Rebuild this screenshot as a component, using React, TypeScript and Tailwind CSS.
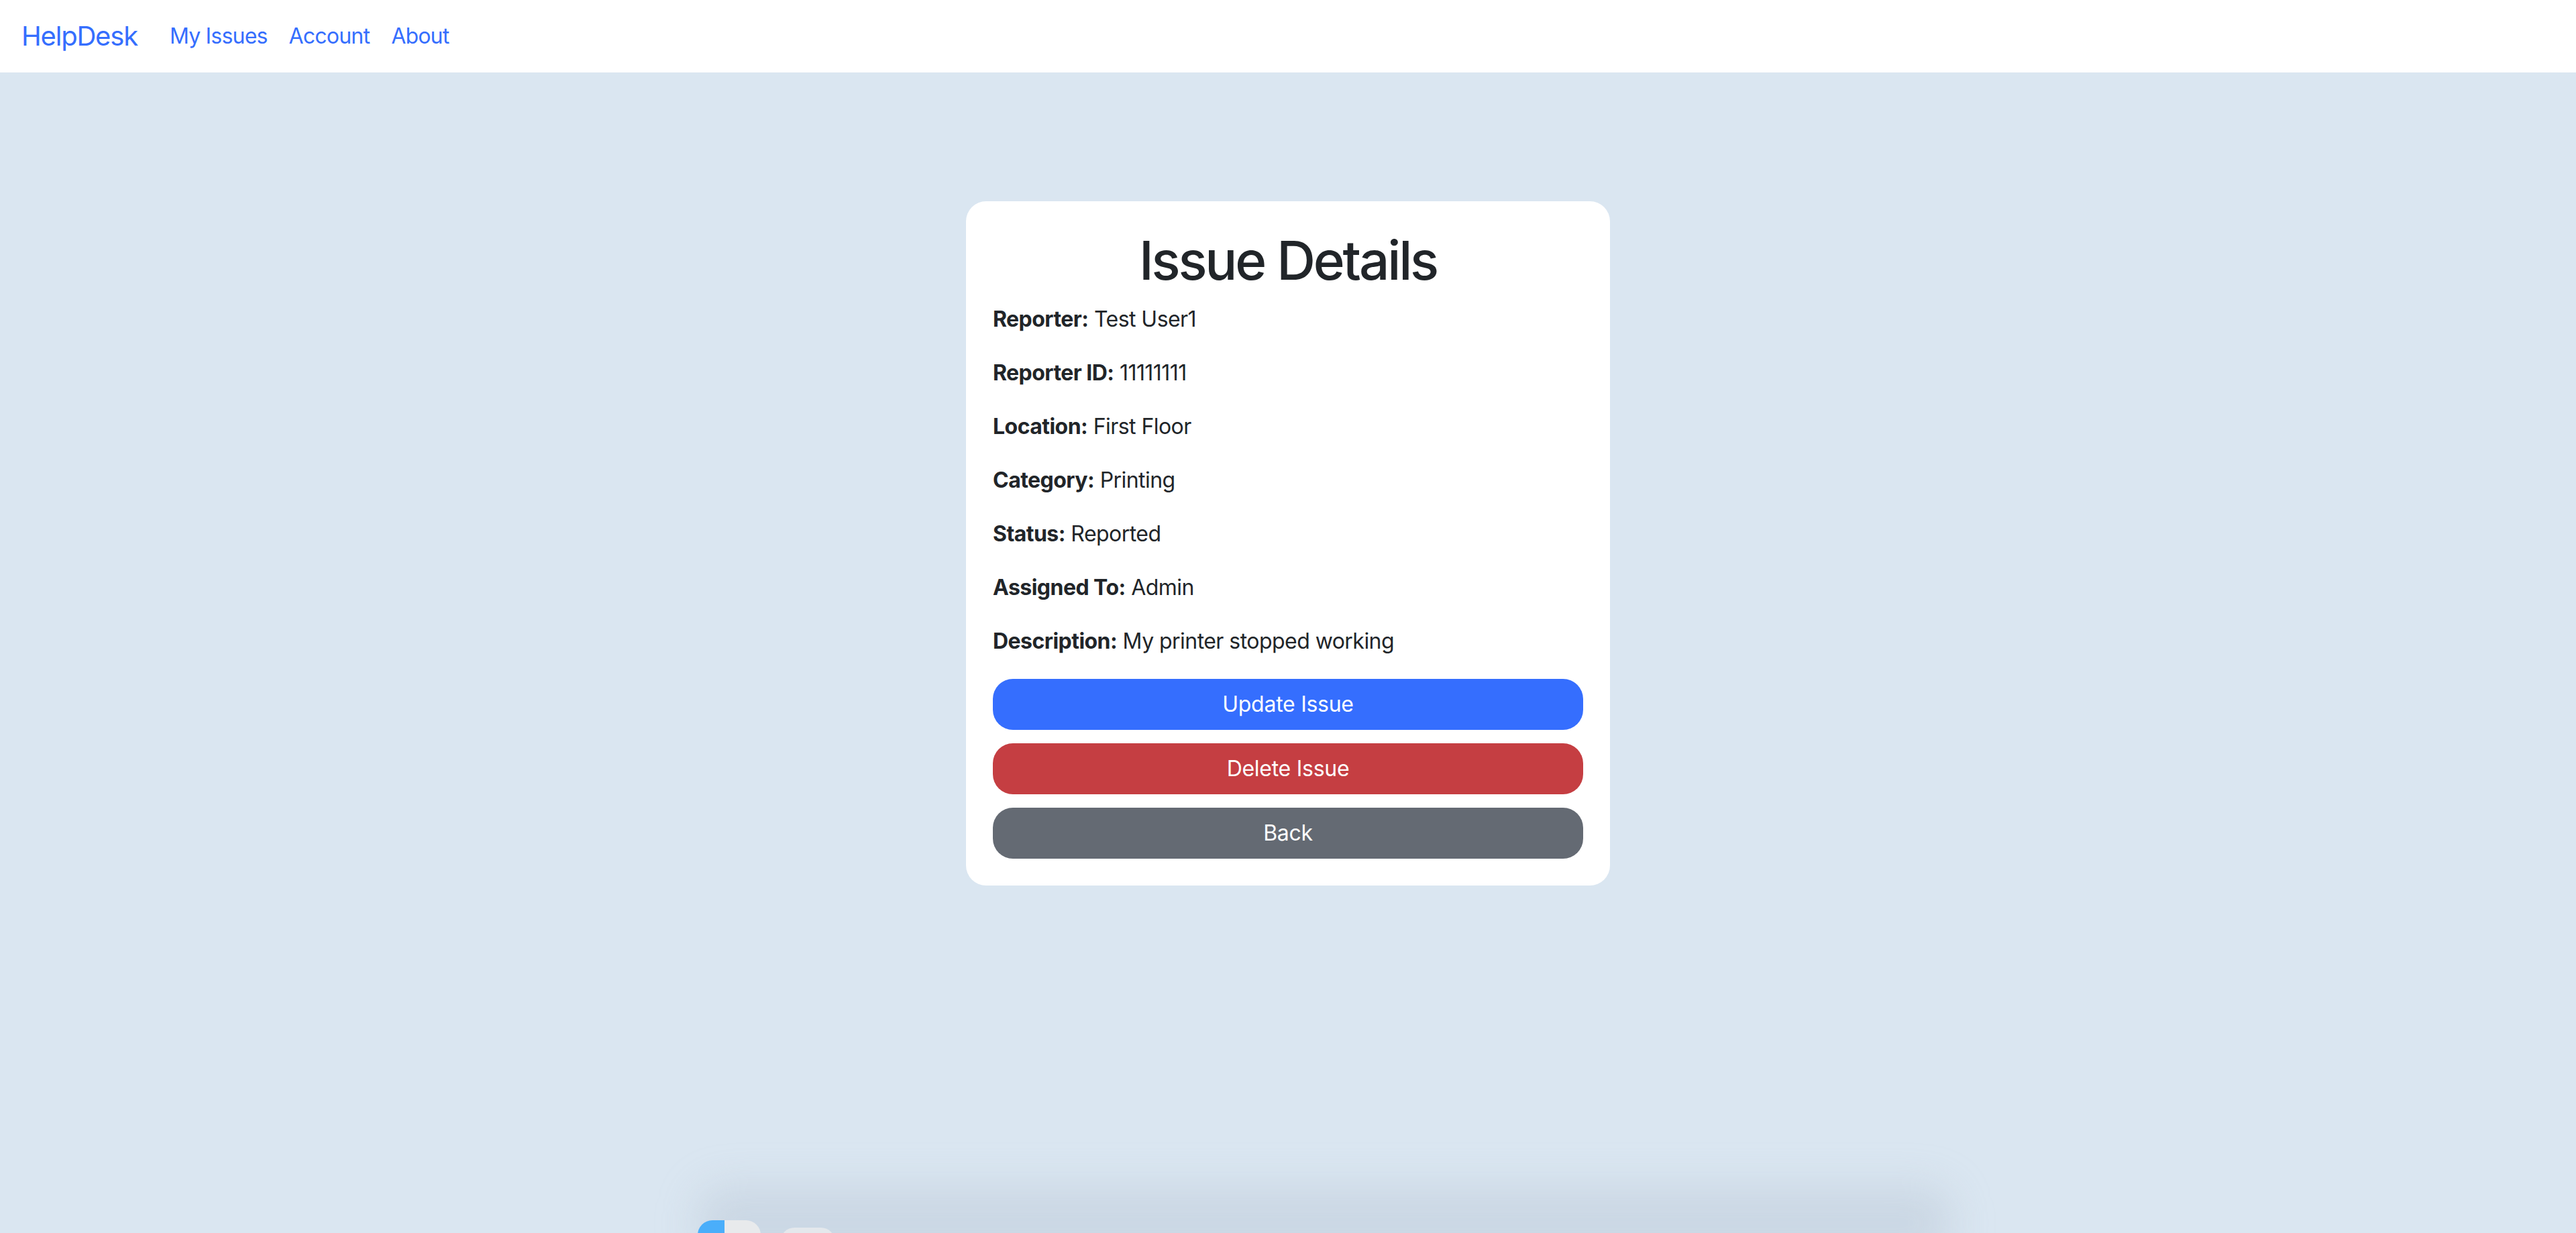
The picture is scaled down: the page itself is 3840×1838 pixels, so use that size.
import React from 'react'

const fields: [string, string][] = [
  ['Reporter:', 'Test User1'],
  ['Reporter ID:', '11111111'],
  ['Location:', 'First Floor'],
  ['Category:', 'Printing'],
  ['Status:', 'Reported'],
  ['Assigned To:', 'Admin'],
  ['Description:', 'My printer stopped working'],
]

function Navbar() {
  return (
    <nav className="h-[108px] bg-white flex items-center pl-[32px]">
      <a className="text-[40px] text-[#356efe] mr-[32px] leading-none tracking-[-0.03em]">HelpDesk</a>
      <div className="flex items-center">
        {['My Issues', 'Account', 'About'].map((l) => (
          <a key={l} className="px-[16px] text-[32px] text-[#356efe] leading-none tracking-[-0.025em]">
            {l}
          </a>
        ))}
      </div>
    </nav>
  )
}

function Dock() {
  return (
    <div className="absolute bottom-0 left-[1000px] w-[1950px] h-[100px] pointer-events-none">
      <div className="absolute inset-x-[40px] bottom-[-40px] h-[110px] rounded-[40px] bg-[#a9b7c6]/30 blur-[30px]" />
      <div className="absolute left-[40px] top-[81px] w-[94px] h-[40px] rounded-t-[22px] overflow-hidden flex">
        <div className="w-[40px] bg-[#4aaefa]" />
        <div className="flex-1 bg-[#e8eaec]" />
      </div>
      <div className="absolute left-[164px] top-[92px] w-[80px] h-[30px] rounded-t-[20px] bg-[#e4e8ec]" />
    </div>
  )
}

export default function App() {
  return (
    <div
      className="relative min-h-screen bg-[#dae6f1] overflow-hidden text-[#212529]"
      style={{ fontFamily: 'Inter, "Noto Sans", sans-serif' }}
    >
      <Navbar />
      <div className="flex justify-center pt-[192px]">
        <div className="w-[960px] bg-white rounded-[30px] p-[40px]">
          <h1 className="text-[80px] leading-[96px] font-medium text-center mb-[16px] tracking-[-0.04em]">
            Issue Details
          </h1>
          {fields.map(([label, value]) => (
            <p key={label} className="text-[32px] leading-[48px] mb-[32px] tracking-[-0.017em]">
              <b className="font-bold">{label}</b> {value}
            </p>
          ))}
          <div className="flex flex-col gap-[20px] tracking-[-0.017em]">
            <button className="h-[76px] rounded-[30px] bg-[#356efe] text-white text-[32px]">
              Update Issue
            </button>
            <button className="h-[76px] rounded-[30px] bg-[#c53e42] text-white text-[32px]">
              Delete Issue
            </button>
            <button className="h-[76px] rounded-[30px] bg-[#646a73] text-white text-[32px]">
              Back
            </button>
          </div>
        </div>
      </div>
      <Dock />
    </div>
  )
}
